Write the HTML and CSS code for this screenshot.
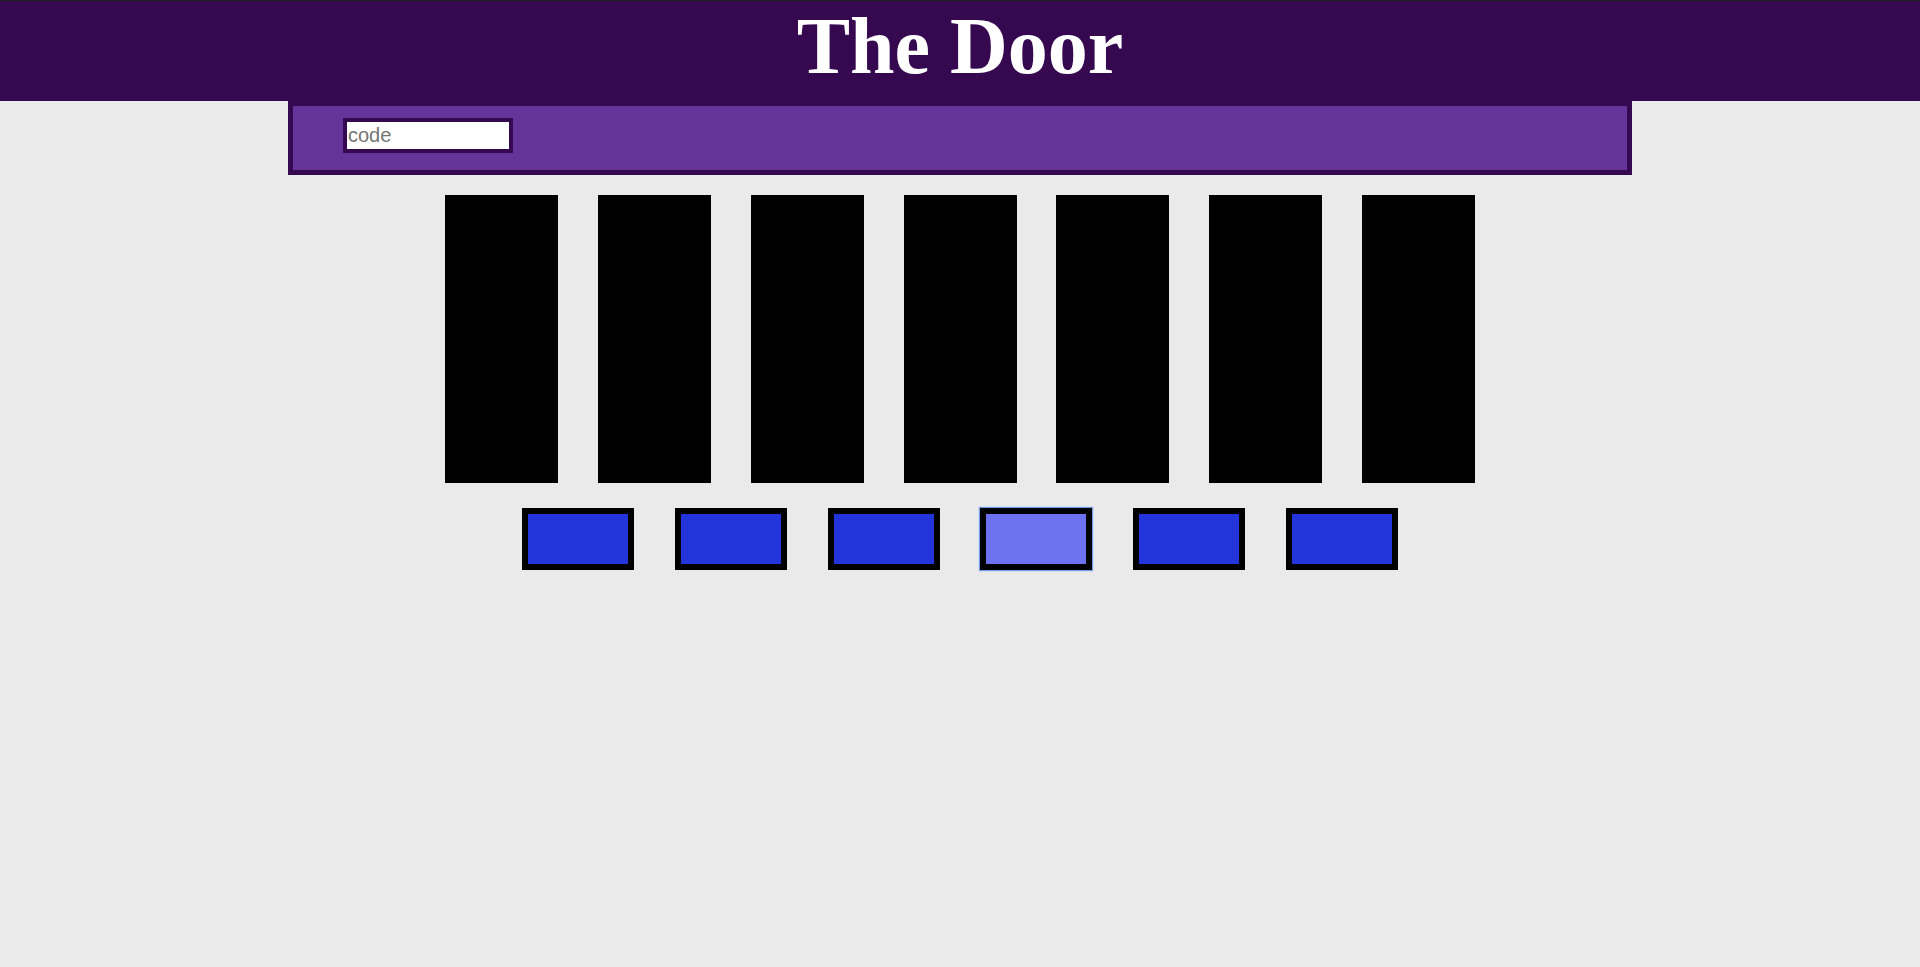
FILE: index.html
```html
<!DOCTYPE html>
<html lang="en">
<head>
<meta charset="utf-8">
<title>The Door</title>
<link rel="stylesheet" href="styles.css">
</head>
<body>
<header class="site-header">
  <h1 class="title">The Door</h1>
</header>
<div class="code-bar">
  <input class="code-input" type="text" placeholder="code">
</div>
<div class="doors">
  <div class="door"></div>
  <div class="door"></div>
  <div class="door"></div>
  <div class="door"></div>
  <div class="door"></div>
  <div class="door"></div>
  <div class="door"></div>
</div>
<div class="keys">
  <button class="key"></button>
  <button class="key"></button>
  <button class="key"></button>
  <button class="key key-active"></button>
  <button class="key"></button>
  <button class="key"></button>
</div>
</body>
</html>
```

FILE: styles.css
```css
html, body {
  margin: 0;
  padding: 0;
}
body {
  background: #eaeaea;
  border-top: 1px solid #1f1f1f;
  min-height: 966px;
  font-family: "Liberation Sans", Arial, sans-serif;
}
.site-header {
  background: #36084f;
  height: 100px;
  box-sizing: border-box;
}
.title {
  margin: 0;
  font-family: "Liberation Serif", "Times New Roman", serif;
  font-weight: bold;
  font-size: 80px;
  line-height: 90px;
  color: #ffffff;
  text-align: center;
}
.code-bar {
  width: 1344px;
  height: 74px;
  margin: 0 auto;
  box-sizing: border-box;
  border: 5px solid #36084f;
  background: #663399;
  padding: 12px 50px;
}
.code-input {
  display: block;
  width: 170px;
  height: 35px;
  box-sizing: border-box;
  border: 4px solid #36084f;
  background: #ffffff;
  margin: 0;
  padding: 2px 1px;
  font-family: "Liberation Sans", Arial, sans-serif;
  font-size: 20px;
  color: #333;
  outline: none;
}
.code-input::placeholder {
  color: #757575;
}
.doors {
  display: flex;
  justify-content: center;
  gap: 39.8px;
  margin-top: 20px;
}
.door {
  width: 113px;
  height: 288px;
  background: #000000;
}
.keys {
  display: flex;
  justify-content: center;
  gap: 40.8px;
  margin-top: 25px;
}
.key {
  width: 112px;
  height: 62px;
  box-sizing: border-box;
  border: 6px solid #000000;
  background: #2335da;
  margin: 0;
  padding: 0;
}
.key-active {
  background: #6b71ef;
  box-shadow: 0 0 1px 1px #6c9fee;
}
```
